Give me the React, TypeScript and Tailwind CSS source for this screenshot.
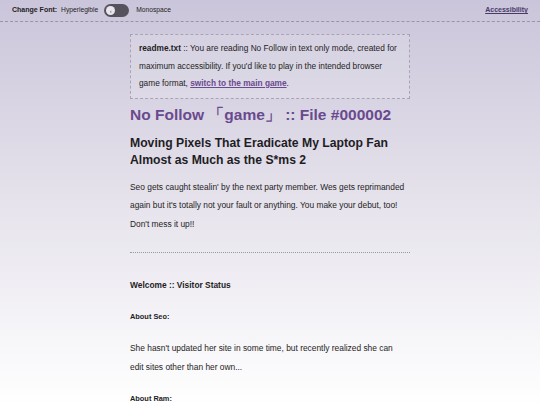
export default function App() {
  return (
    <div className="min-h-[405px] bg-gradient-to-b from-[#cac5da] via-[#e6e3ec] to-white font-['Liberation_Sans',Arial,sans-serif] text-[#1f1d24]">
      <header className="flex h-[22px] items-center border-b border-dashed border-[#9a95a6] px-3 text-[7px]">
        <span className="font-bold">Change Font:</span>
        <span className="ml-[4px] text-[6.7px]">Hyperlegible</span>
        <span className="ml-[6px] flex h-[13px] w-[25px] items-center rounded-full bg-[#57535d] px-[2px]">
          <span className="flex h-[9px] w-[9px] items-center justify-center rounded-full bg-[#e9e6ef] text-[6px] leading-none text-[#57535d]">
            ‹
          </span>
        </span>
        <span className="ml-[7px] text-[6.7px]">Monospace</span>
        <a className="ml-auto font-bold text-[#4a3a6a] underline" href="#">
          Accessibility
        </a>
      </header>

      <main className="mx-auto w-[280px] pt-3">
        <div className="border border-dashed border-[#a9a4b4] bg-white/15 px-[8px] py-[5px] text-[8.3px] leading-[17.5px]">
          <span className="font-bold">readme.txt</span> :: You are reading No Follow in text only mode, created for
          maximum accessibility. If you'd like to play in the intended browser game format,{" "}
          <a href="#" className="font-bold text-[#6a4a8e] underline">
            switch to the main game
          </a>
          .
        </div>

        <h1 className="mt-[5px] text-[15.5px] font-bold leading-[22px] text-[#6a4a8e]">
          No Follow 「game」 :: File #000002
        </h1>
        <h2 className="mt-[9px] text-[12.2px] font-bold leading-[17px]">
          Moving Pixels That Eradicate My Laptop Fan Almost as Much as the S*ms 2
        </h2>
        <p className="mt-[9px] text-[8.4px] leading-[18.5px]">
          Seo gets caught stealin' by the next party member. Wes gets reprimanded again but it's totally not your
          fault or anything. You make your debut, too! Don't mess it up!!
        </p>

        <div className="mt-[19px] border-t border-dotted border-[#9d98a6]" />

        <h3 className="mt-[24px] text-[8.4px] font-bold leading-[16px]">Welcome :: Visitor Status</h3>
        <h4 className="mt-[16px] text-[7.4px] font-bold leading-[16px]">About Seo:</h4>
        <p className="mt-[14px] pr-[12px] text-[8.4px] leading-[18.5px]">
          She hasn't updated her site in some time, but recently realized she can edit sites other than her own...
        </p>
        <h4 className="mt-[15px] text-[7.4px] font-bold leading-[16px]">About Ram:</h4>
      </main>
    </div>
  );
}
